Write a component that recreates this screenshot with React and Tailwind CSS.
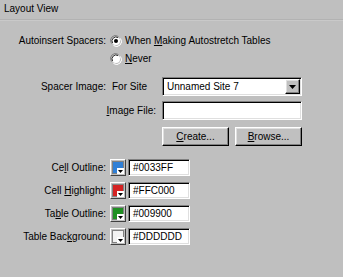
import React from 'react';

const raised =
  'border border-t-white border-l-white border-r-black border-b-black shadow-[inset_-1px_-1px_#808080,inset_1px_1px_#dfdfdf] bg-[#c0c0c0]';
const sunken =
  'border border-t-[#808080] border-l-[#808080] border-r-white border-b-white shadow-[inset_1px_1px_#000,inset_-1px_-1px_#dfdfdf] bg-white';

const Radio = ({ checked }) => (
  <svg width="12" height="12" viewBox="0 0 12 12" className="shrink-0">
    <path d="M1.5 8.5A5 5 0 0 1 8.5 1.5" stroke="#808080" strokeWidth="1" fill="none" />
    <path d="M3.5 10.5A5 5 0 0 0 10.5 3.5" stroke="#ffffff" strokeWidth="1" fill="none" />
    <circle cx="6" cy="6" r="4" fill="#ffffff" />
    <path d="M2.6 8.1A4 4 0 0 1 8.1 2.6" stroke="#303030" strokeWidth="1" fill="none" />
    {checked && <circle cx="6" cy="6" r="2" fill="#000" />}
  </svg>
);

const Swatch = ({ color }) => (
  <div className="relative w-[16px] h-[17px] border border-t-white border-l-white border-r-[#404040] border-b-[#404040] bg-[#c0c0c0] p-[1px]">
    <div className="w-full h-full border border-[#808080]" style={{ background: color }} />
    <div className="absolute right-[1px] bottom-[1px] w-[7px] h-[6px] bg-white flex items-center justify-center">
      <svg width="5" height="3" viewBox="0 0 5 3">
        <path d="M0 0H5L2.5 3Z" fill="#000" />
      </svg>
    </div>
  </div>
);

const ColorRow = ({ label, color, value }) => (
  <div className="flex items-center h-[17px]">
    <div className="w-[106px] text-right">{label}</div>
    <div className="ml-[4px]">
      <Swatch color={color} />
    </div>
    <div className={`ml-[2px] w-[62px] h-[17px] flex items-center pl-[4px] ${sunken}`}>{value}</div>
  </div>
);

const App = () => {
  return (
    <div className="w-[343px] h-[277px] bg-[#bfbfbf] text-black text-[10px] leading-[12px] overflow-hidden font-['Liberation_Sans',Arial,sans-serif]">
      <div className="h-[19px] pl-[4px] pt-[3px]">Layout View</div>
      <div className="h-[1px] bg-[#b2b2b2]" />
      <div className="h-[1px] bg-[#c9c9c9]" />

      <div className="mt-[13px] flex items-center h-[14px]">
        <div className="w-[106px] text-right">Autoinsert Spacers:</div>
        <div className="ml-[4px]">
          <Radio checked />
        </div>
        <div className="ml-[3px]">
          When <span className="underline">M</span>aking Autostretch Tables
        </div>
      </div>
      <div className="mt-[4px] flex items-center h-[14px]">
        <div className="w-[106px]" />
        <div className="ml-[4px]">
          <Radio />
        </div>
        <div className="ml-[3px]">
          <span className="underline">N</span>ever
        </div>
      </div>

      <div className="mt-[11px] flex items-center h-[19px]">
        <div className="w-[106px] text-right">Spacer Image:</div>
        <div className="ml-[6px] w-[50px]">For Site</div>
        <div className={`w-[140px] h-[19px] flex items-center justify-between ${sunken}`}>
          <span className="pl-[4px]">Unnamed Site 7</span>
          <div className={`w-[15px] h-[15px] mr-[1px] flex items-center justify-center ${raised}`}>
            <svg width="7" height="4" viewBox="0 0 7 4">
              <path d="M0 0H7L3.5 4Z" fill="#000" />
            </svg>
          </div>
        </div>
      </div>

      <div className="mt-[5px] flex items-center h-[19px]">
        <div className="w-[156px] text-right">
          <span className="underline">I</span>mage File:
        </div>
        <div className={`ml-[6px] w-[140px] h-[19px] ${sunken}`} />
      </div>

      <div className="mt-[7px] flex h-[19px]">
        <div className="w-[162px]" />
        <div className={`w-[67px] h-[19px] flex items-center justify-center ${raised}`}>
          <span>
            <span className="underline">C</span>reate...
          </span>
        </div>
        <div className={`ml-[6px] w-[67px] h-[19px] flex items-center justify-center ${raised}`}>
          <span>
            <span className="underline">B</span>rowse...
          </span>
        </div>
      </div>

      <div className="mt-[13px] flex flex-col gap-[6px]">
        <ColorRow
          label={<>Ce<span className="underline">l</span>l Outline:</>}
          color="#2f7fd6"
          value="#0033FF"
        />
        <ColorRow
          label={<>Cell <span className="underline">H</span>ighlight:</>}
          color="#d42222"
          value="#FFC000"
        />
        <ColorRow
          label={<>Ta<span className="underline">b</span>le Outline:</>}
          color="#1f8f22"
          value="#009900"
        />
        <ColorRow
          label={<>Table Bac<span className="underline">k</span>ground:</>}
          color="#f2f2f2"
          value="#DDDDDD"
        />
      </div>
    </div>
  );
};

export default App;
